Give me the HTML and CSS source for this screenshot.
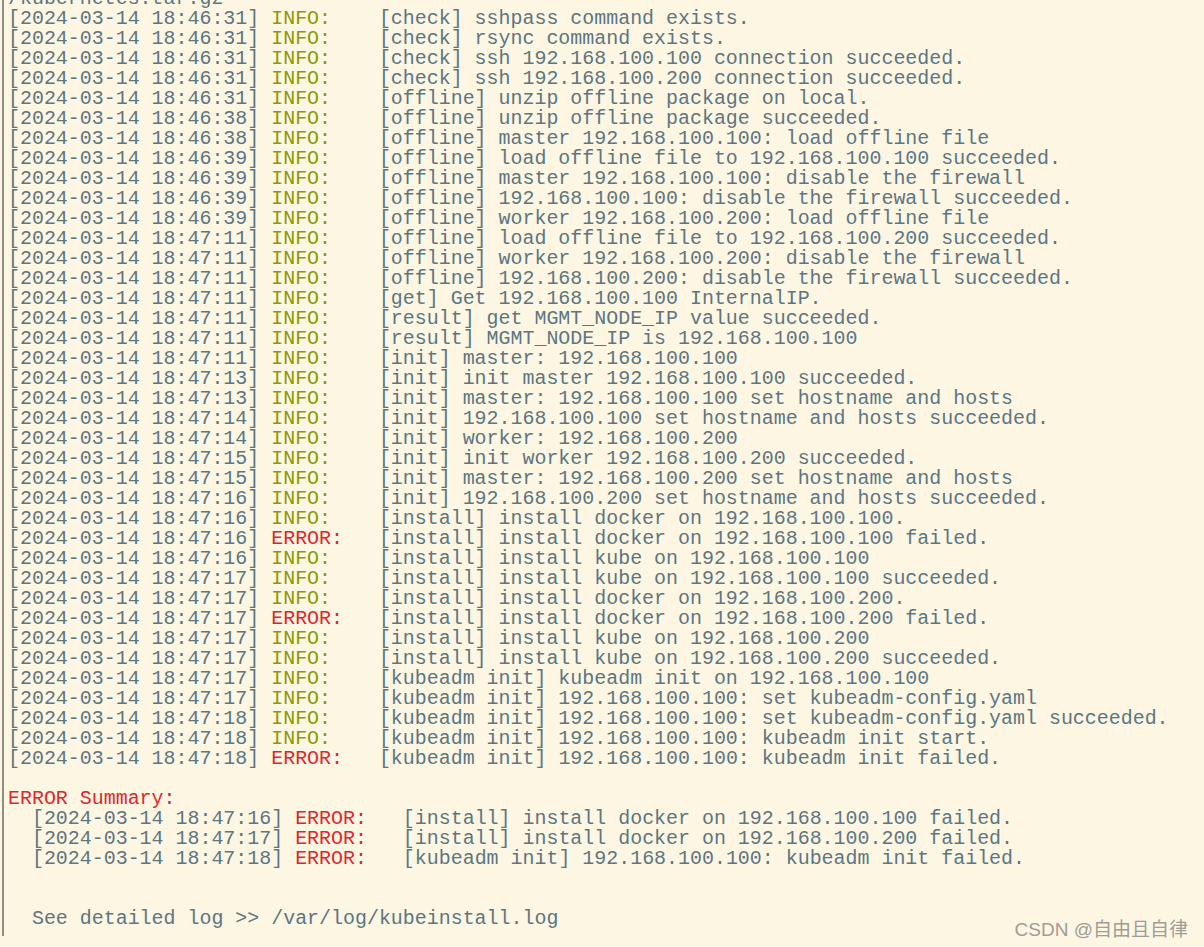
FILE: index.html
```html
<!DOCTYPE html>
<html>
<head>
<meta charset="utf-8">
<link rel="stylesheet" href="styles.css">
</head>
<body>
<div class="term">
<pre class="log">/kubernetes.tar.gz
[2024-03-14 18:46:31] <span class="info">INFO:</span>    [check] sshpass command exists.
[2024-03-14 18:46:31] <span class="info">INFO:</span>    [check] rsync command exists.
[2024-03-14 18:46:31] <span class="info">INFO:</span>    [check] ssh 192.168.100.100 connection succeeded.
[2024-03-14 18:46:31] <span class="info">INFO:</span>    [check] ssh 192.168.100.200 connection succeeded.
[2024-03-14 18:46:31] <span class="info">INFO:</span>    [offline] unzip offline package on local.
[2024-03-14 18:46:38] <span class="info">INFO:</span>    [offline] unzip offline package succeeded.
[2024-03-14 18:46:38] <span class="info">INFO:</span>    [offline] master 192.168.100.100: load offline file
[2024-03-14 18:46:39] <span class="info">INFO:</span>    [offline] load offline file to 192.168.100.100 succeeded.
[2024-03-14 18:46:39] <span class="info">INFO:</span>    [offline] master 192.168.100.100: disable the firewall
[2024-03-14 18:46:39] <span class="info">INFO:</span>    [offline] 192.168.100.100: disable the firewall succeeded.
[2024-03-14 18:46:39] <span class="info">INFO:</span>    [offline] worker 192.168.100.200: load offline file
[2024-03-14 18:47:11] <span class="info">INFO:</span>    [offline] load offline file to 192.168.100.200 succeeded.
[2024-03-14 18:47:11] <span class="info">INFO:</span>    [offline] worker 192.168.100.200: disable the firewall
[2024-03-14 18:47:11] <span class="info">INFO:</span>    [offline] 192.168.100.200: disable the firewall succeeded.
[2024-03-14 18:47:11] <span class="info">INFO:</span>    [get] Get 192.168.100.100 InternalIP.
[2024-03-14 18:47:11] <span class="info">INFO:</span>    [result] get MGMT_NODE_IP value succeeded.
[2024-03-14 18:47:11] <span class="info">INFO:</span>    [result] MGMT_NODE_IP is 192.168.100.100
[2024-03-14 18:47:11] <span class="info">INFO:</span>    [init] master: 192.168.100.100
[2024-03-14 18:47:13] <span class="info">INFO:</span>    [init] init master 192.168.100.100 succeeded.
[2024-03-14 18:47:13] <span class="info">INFO:</span>    [init] master: 192.168.100.100 set hostname and hosts
[2024-03-14 18:47:14] <span class="info">INFO:</span>    [init] 192.168.100.100 set hostname and hosts succeeded.
[2024-03-14 18:47:14] <span class="info">INFO:</span>    [init] worker: 192.168.100.200
[2024-03-14 18:47:15] <span class="info">INFO:</span>    [init] init worker 192.168.100.200 succeeded.
[2024-03-14 18:47:15] <span class="info">INFO:</span>    [init] master: 192.168.100.200 set hostname and hosts
[2024-03-14 18:47:16] <span class="info">INFO:</span>    [init] 192.168.100.200 set hostname and hosts succeeded.
[2024-03-14 18:47:16] <span class="info">INFO:</span>    [install] install docker on 192.168.100.100.
[2024-03-14 18:47:16] <span class="err">ERROR:</span>   [install] install docker on 192.168.100.100 failed.
[2024-03-14 18:47:16] <span class="info">INFO:</span>    [install] install kube on 192.168.100.100
[2024-03-14 18:47:17] <span class="info">INFO:</span>    [install] install kube on 192.168.100.100 succeeded.
[2024-03-14 18:47:17] <span class="info">INFO:</span>    [install] install docker on 192.168.100.200.
[2024-03-14 18:47:17] <span class="err">ERROR:</span>   [install] install docker on 192.168.100.200 failed.
[2024-03-14 18:47:17] <span class="info">INFO:</span>    [install] install kube on 192.168.100.200
[2024-03-14 18:47:17] <span class="info">INFO:</span>    [install] install kube on 192.168.100.200 succeeded.
[2024-03-14 18:47:17] <span class="info">INFO:</span>    [kubeadm init] kubeadm init on 192.168.100.100
[2024-03-14 18:47:17] <span class="info">INFO:</span>    [kubeadm init] 192.168.100.100: set kubeadm-config.yaml
[2024-03-14 18:47:18] <span class="info">INFO:</span>    [kubeadm init] 192.168.100.100: set kubeadm-config.yaml succeeded.
[2024-03-14 18:47:18] <span class="info">INFO:</span>    [kubeadm init] 192.168.100.100: kubeadm init start.
[2024-03-14 18:47:18] <span class="err">ERROR:</span>   [kubeadm init] 192.168.100.100: kubeadm init failed.

<span class="err">ERROR Summary:</span>
  [2024-03-14 18:47:16] <span class="err">ERROR:</span>   [install] install docker on 192.168.100.100 failed.
  [2024-03-14 18:47:17] <span class="err">ERROR:</span>   [install] install docker on 192.168.100.200 failed.
  [2024-03-14 18:47:18] <span class="err">ERROR:</span>   [kubeadm init] 192.168.100.100: kubeadm init failed.


  See detailed log &gt;&gt; /var/log/kubeinstall.log
</pre>
</div>
<div class="watermark">CSDN @自由且自律</div>
</body>
</html>
```

FILE: styles.css
```css
html, body {
  margin: 0;
  padding: 0;
  background: #fdf6e3;
  height: 100%;
  overflow: hidden;
}
.term {
  margin-left: 2px;
  border-left: 2px solid #8f8c86;
  padding-left: 4px;
  height: 100%;
  box-sizing: border-box;
}
.log {
  margin: -11px 0 0 0;
  font-family: "Liberation Mono", "DejaVu Sans Mono", monospace;
  font-size: 19.95px;
  line-height: 20px;
  color: #5c7682;
  white-space: pre;
}
.info {
  color: #8c9a00;
}
.err {
  color: #e0262c;
}
.watermark {
  position: absolute;
  right: 16px;
  bottom: 6px;
  font-family: "Liberation Sans", "Noto Sans CJK SC", sans-serif;
  font-size: 19px;
  color: #a09c96;
}
```
